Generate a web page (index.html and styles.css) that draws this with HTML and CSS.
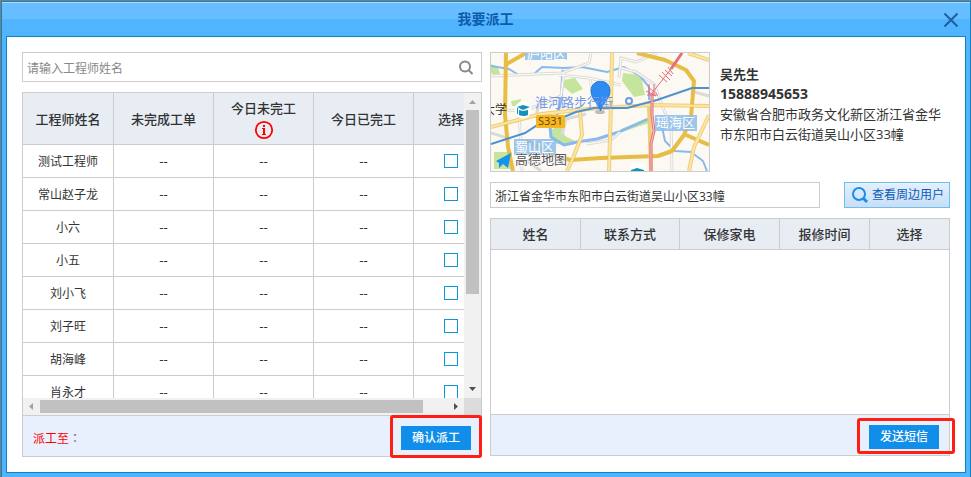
FILE: index.html
```html
<!DOCTYPE html>
<html lang="zh-CN">
<head>
<meta charset="utf-8">
<title>我要派工</title>
<link rel="stylesheet" href="styles.css">
</head>
<body>
<section class="dialog" role="dialog" aria-labelledby="dialog-title">
  <header class="titlebar">
    <h1 class="title" id="dialog-title">我要派工</h1>
    <button class="close" type="button" aria-label="关闭">
      <svg width="16" height="16" viewBox="0 0 16 16"><path d="M1.500 1.500L14.500 14.500M14.500 1.500L1.500 14.500" fill="none" stroke="#1f5f9e" stroke-width="2"/></svg>
    </button>
  </header>
  <main class="content">
    <div class="column">
      <div class="search">
        <input class="search-input" type="text" placeholder="请输入工程师姓名" aria-label="工程师姓名">
        <button class="search-button" type="button" aria-label="搜索">
          <svg width="16" height="16" viewBox="0 0 16 16"><g fill="none" stroke="#888" stroke-width="2"><circle cx="7" cy="7.500" r="5"/><path d="M10.500 11L14.500 15"/></g></svg>
        </button>
      </div>
      <div class="panel engineers">
        <div class="scroller">
          <div class="viewport">
            <table class="grid engineer-grid">
              <colgroup><col class="c-name"><col class="c-num"><col class="c-num"><col class="c-num"><col class="c-pick"></colgroup>
              <thead>
                <tr><th>工程师姓名</th><th>未完成工单</th><th>今日未完工<svg class="info" width="20" height="20" viewBox="0 0 20 20"><circle cx="10" cy="10" r="8.200" fill="none" stroke="#f00" stroke-width="1.800"/><path d="M9 5h2v2H9zM8 8h3v6h1v1H8v-1h1V9H8z" fill="#f00"/></svg></th><th>今日已完工</th><th>选择</th></tr>
              </thead>
              <tbody>
                <tr><td>测试工程师</td><td>--</td><td>--</td><td>--</td><td><input class="tick" type="checkbox" aria-label="选择测试工程师"></td></tr>
                <tr><td>常山赵子龙</td><td>--</td><td>--</td><td>--</td><td><input class="tick" type="checkbox" aria-label="选择常山赵子龙"></td></tr>
                <tr><td>小六</td><td>--</td><td>--</td><td>--</td><td><input class="tick" type="checkbox" aria-label="选择小六"></td></tr>
                <tr><td>小五</td><td>--</td><td>--</td><td>--</td><td><input class="tick" type="checkbox" aria-label="选择小五"></td></tr>
                <tr><td>刘小飞</td><td>--</td><td>--</td><td>--</td><td><input class="tick" type="checkbox" aria-label="选择刘小飞"></td></tr>
                <tr><td>刘子旺</td><td>--</td><td>--</td><td>--</td><td><input class="tick" type="checkbox" aria-label="选择刘子旺"></td></tr>
                <tr><td>胡海峰</td><td>--</td><td>--</td><td>--</td><td><input class="tick" type="checkbox" aria-label="选择胡海峰"></td></tr>
                <tr><td>肖永才</td><td>--</td><td>--</td><td>--</td><td><input class="tick" type="checkbox" aria-label="选择肖永才"></td></tr>
              </tbody>
            </table>
          </div>
          <div class="bar bar-v" aria-hidden="true">
            <svg width="17" height="17" viewBox="0 0 17 17"><path d="M5 11L8.500 7L12 11z" fill="#a3a3a3"/></svg>
            <div class="track"><div class="thumb"></div></div>
            <svg width="17" height="17" viewBox="0 0 17 17"><path d="M5 6L8.500 10L12 6z" fill="#505050"/></svg>
          </div>
          <div class="bar bar-h" aria-hidden="true">
            <svg width="17" height="17" viewBox="0 0 17 17"><path d="M10 5L6 8.500L10 12z" fill="#a3a3a3"/></svg>
            <div class="track"><div class="thumb"></div></div>
            <svg width="17" height="17" viewBox="0 0 17 17"><path d="M7 5L11 8.500L7 12z" fill="#505050"/></svg>
          </div>
          <div class="corner"></div>
        </div>
        <footer class="panel-footer">
          <p class="assign"><span class="assign-label">派工至</span><span class="colon" lang="zh-TW">：</span></p>
          <span class="marked marked-confirm"><button class="primary" type="button">确认派工</button></span>
        </footer>
      </div>
    </div>

    <div class="column">
      <div class="customer">
        <svg class="map" width="218" height="118" viewBox="0 0 218 118" role="img" aria-label="地图">
          <rect width="218" height="118" fill="#fcf9f2"/>
          <g fill="#c5e59c">
            <path d="M0 11Q8 13 9 21L3 22L0 20z"/><path d="M73 27L84 25L92 36L81 41L73 34z"/><path d="M61 76L70 73L74 83L84 88L82 92L65 91L59 82z"/><path d="M132 20L150 22L154 42L143 44L131 28z"/><path d="M20 48L30 46L29 53L21 53z"/><path d="M130 76L157 65L158 70L131 79z"/><path d="M3 99h18v17H3z"/>
          </g>
          <g fill="none" stroke="#8ab9ef" stroke-width="2" stroke-linejoin="round">
            <path d="M0 13L18 16L28 22L43 21L51 14L73 15L91 14L116 19L133 14L149 23L158 34L158 47"/>
            <path d="M72 17L70 48L66 62L59 73L60 84L73 92L86 89L106 86L128 79L157 66" stroke-width="3"/>
            <path d="M171 74L174 88L184 98L200 99L212 108L216 118"/>
          </g>
          <g fill="none" stroke="#dcdad5" stroke-width="3"><path d="M0 23L71 20L98 10L100 0M68 22L98 25L130 32M128 25L130 5L145 9L166 0M73 20L70 43L34 58L12 57M99 25L103 48M0 80L20 86M28 57L31 118M71 82L75 66L95 61M96 91L120 87L129 79M130 15L145 19L163 31L176 65M158 64L180 68L181 118M45 65L48 48M200 38L218 43M28 102L50 118"/></g>
          <g fill="none" stroke="#fff" stroke-width="1"><path d="M0 23L71 20L98 10L100 0M68 22L98 25L130 32M128 25L130 5L145 9L166 0M73 20L70 43L34 58L12 57M99 25L103 48M28 57L31 118M96 91L120 87L129 79M130 15L145 19L163 31L176 65M158 64L180 68L181 118"/></g>
          <g fill="none" stroke="#f0cd78" stroke-width="4" stroke-linejoin="round">
            <path d="M121 0L120 50L118 118M0 74L50 61L97 56L158 52L218 53M89 58L91 82L82 105L76 118"/>
            <path d="M14 12L35 0M15 0L14 62L17 94L22 118" stroke="#e8bd45"/>
            <path d="M146 0L174 7L195 17L203 28L200 64L193 82L181 98L167 103L110 105L79 107L62 101L35 88" stroke="#e8bd45"/>
            <path d="M195 82L218 92" stroke="#e8bd45"/><path d="M197 0L218 7M218 62L203 94L198 118M158 52L160 118"/>
          </g>
          <g fill="none" stroke="#fae7a8" stroke-width="2" stroke-linejoin="round"><path d="M121 0L120 50L118 118M0 74L50 61L97 56L158 52L218 53M89 58L91 82L82 105L76 118M197 0L218 7M218 62L203 94L198 118"/></g>
          <path d="M0 91L34 80L48 71L68 66L85 59L103 55L136 55L166 47L201 35H218" fill="none" stroke="#4e91cf" stroke-width="2"/>
          <g fill="none" stroke="#e26f7b"><path d="M191 0L180 16M161 40V62L163 78L160 91V118" stroke-width="3"/><path d="M161 40V62L163 78L160 91V118" stroke="#f8c8c8" stroke-width="1"/><path d="M180 16L161 40" stroke-width="1"/><path d="M171 19l8 8M168 22l8 7M177 14l5 7M174 17l7 6M157 34l9 7M155 38l10 5M158 31v11M163 31v12M156 42h11" stroke-width="1"/></g>
          <g class="district">
            <rect x="34" y="-8" width="42" height="15"/><text x="36" y="5">庐阳区</text>
            <rect x="23" y="86" width="42" height="16"/><text x="24" y="98">蜀山区</text>
            <rect x="164" y="62" width="42" height="16"/><text x="165" y="74">瑶海区</text>
          </g>
          <text class="place" x="-8" y="61">大学</text>
          <circle cx="32" cy="57" r="8.500" fill="#fff"/><path d="M26 54l6-2l7 2l-7 3zM28 57l4 1l5-1v5q-4 2-9 0zM26 55h1v6h-1z" fill="#1492b9"/>
          <circle cx="146" cy="118" r="8.500" fill="#fff"/><path d="M140 117l6-2l7 2v1h-13z" fill="#1492b9"/>
          <circle cx="138" cy="48" r="3" fill="#fff" stroke="#6d98ec" stroke-width="2"/>
          <rect x="45" y="62" width="29" height="13" rx="1" fill="#f8b51e"/><text class="route" x="47" y="72">S331</text>
          <path d="M5 108L20 100L17 115L12 111L8 115V110z" fill="#1593ec"/>
          <text class="brand" x="24" y="111">高德地图</text>
          <ellipse cx="109" cy="59" rx="5" ry="2" fill="#9b8c9d" opacity=".6"/>
          <path d="M109.500 58C109 52 100 46 100 38C100 25 119 25 119 38C119 46 110 52 109.500 58z" fill="#2e8bf2" stroke="#2477d5" stroke-width="1"/>
          <text class="street" x="44" y="54">淮河路步行街</text>
        </svg>
        <address class="contact">
          <strong>吴先生</strong>
          <strong class="phone">15888945653</strong>
          <span>安徽省合肥市政务文化新区浙江省金华市东阳市白云街道吴山小区33幢</span>
        </address>
      </div>
      <div class="lookup">
        <input class="address-input" type="text" value="浙江省金华市东阳市白云街道吴山小区33幢" aria-label="地址">
        <button class="nearby" type="button">
          <svg width="18" height="18" viewBox="0 0 18 18"><g fill="none" stroke="#168cec" stroke-width="2"><circle cx="8" cy="8" r="6"/><path d="M12 12L16 16" stroke-width="3"/></g></svg>查看周边用户
        </button>
      </div>
      <div class="panel users">
        <table class="grid user-grid">
          <colgroup><col class="u-name"><col class="u-contact"><col class="u-device"><col class="u-time"><col class="u-pick"></colgroup>
          <thead><tr><th>姓名</th><th>联系方式</th><th>保修家电</th><th>报修时间</th><th>选择</th></tr></thead>
        </table>
        <footer class="panel-footer">
          <span class="marked marked-send"><button class="primary" type="button">发送短信</button></span>
        </footer>
      </div>
    </div>
  </main>
</section>
</body>
</html>
```
FILE: styles.css
```css
* {
  box-sizing: border-box;
}

body {
  margin: 0;
  padding: 1px 0 0 1px;
  min-height: 100vh;
  display: flex;
  background: #7c7d7f;
  color: #333;
  font: 12px/20px "Open Sans", "Noto Sans CJK SC", sans-serif;
}

button,
input {
  margin: 0;
  font: inherit;
  color: inherit;
}

button {
  padding: 0;
  border: 0;
  background: none;
}

svg {
  display: block;
  flex: none;
}

.dialog {
  flex: 1;
  min-width: 0;
  display: flex;
  flex-direction: column;
  padding: 0 4px 4px;
  border: solid #1183ba;
  border-width: 1px 1px 0;
  background: #50b4ff;
}

.titlebar {
  display: flex;
  align-items: center;
  height: 34px;
  margin: 0 -4px;
  padding: 0 11px 0 26px;
  border-top: 1px solid #a9dcff;
  background: linear-gradient(#66bdff 16px, #50b4ff 16px);
}

.title {
  flex: 1;
  margin: 0;
  color: #0b5cad;
  font-size: 14px;
  line-height: 18px;
  padding-bottom: 2px;
  font-weight: 700;
  text-align: center;
}

.close {
  width: 16px;
  height: 16px;
}

.content {
  flex: 1;
  display: grid;
  grid-template-columns: minmax(0, 1fr) minmax(0, 1fr);
  gap: 8px;
  padding: 15px;
  border: 1px solid #0a86c2;
  background: #fff;
}

.column {
  display: flex;
  flex-direction: column;
  gap: 10px;
}

.search {
  display: flex;
  align-items: center;
  height: 30px;
  padding-right: 7px;
  border: 1px solid #ccc;
}

.search-input {
  flex: 1;
  min-width: 0;
  height: 28px;
  padding: 2px 4px 0;
  border: 0;
  background: none;
}

.search-input::placeholder {
  color: #888;
  opacity: 1;
}

.panel {
  display: flex;
  flex-direction: column;
  border: 1px solid #ccc;
}

.engineers {
  height: 365px;
}

.users {
  height: 238px;
}

.scroller {
  flex: 1;
  min-height: 0;
  display: grid;
  grid-template: minmax(0, 1fr) 17px / minmax(0, 1fr) 17px;
}

.viewport {
  overflow: hidden;
}

.bar {
  display: flex;
  background: #f1f1f1;
}

.bar-v {
  flex-direction: column;
}

.track {
  flex: 1;
  display: flex;
}

.bar-v .track {
  padding: 0 2px;
}

.bar-h .track {
  padding: 2px 0;
}

.thumb {
  background: #c1c1c1;
}

.bar-v .thumb {
  width: 100%;
  height: 68%;
}

.bar-h .thumb {
  width: 94%;
}

.corner {
  background: #dcdcdc;
}

.grid {
  table-layout: fixed;
  border-collapse: separate;
  border-spacing: 0;
  text-align: center;
}

.engineer-grid {
  width: 465px;
}

.user-grid {
  width: 100%;
}

.c-name {
  width: 91px;
}

.c-num {
  width: 100px;
}

.u-name {
  width: 90px;
}

.u-contact {
  width: 99px;
}

.u-device {
  width: 100px;
}

.u-time {
  width: 90px;
}

.grid th,
.grid td {
  padding: 0;
  border: solid #ccc;
  border-width: 0 1px 1px 0;
}

.grid th {
  height: 52px;
  background: #e7edf3;
  font-size: 13px;
  font-weight: 500;
}

.user-grid th {
  height: 31px;
}

.grid td {
  height: 33px;
  padding-top: 2px;
  font-family: "DejaVu Sans", "Noto Sans CJK SC", sans-serif;
}

.grid td:last-child {
  padding-top: 0;
}

.grid th:last-child,
.grid td:last-child {
  border-right: 0;
}

.info {
  margin: 2px auto 0;
}

.tick {
  display: block;
  width: 14px;
  height: 14px;
  margin: 0 auto;
  border: 1px solid #0a98dc;
  background: #fff;
  appearance: none;
}

.panel-footer {
  display: flex;
  align-items: center;
  height: 41px;
  margin-top: auto;
  padding: 4px 10px 0;
  border-top: 1px solid #ccc;
  background: #e8effd;
}

.assign {
  margin: 0;
  color: #667;
}

.assign-label {
  color: #f00;
}

.colon {
  font-family: "Noto Sans CJK TC", sans-serif;
}

.marked {
  position: relative;
  margin-left: auto;
}

.marked::after {
  content: "";
  position: absolute;
  border: 3px solid #ff1e12;
  border-radius: 3px;
  pointer-events: none;
}

.marked-confirm::after {
  inset: -11px -11px -8px;
}

.marked-send::after {
  inset: -7px -16px -5px -12px;
}

.primary {
  display: block;
  width: 70px;
  height: 24px;
  background: #108ee9;
  color: #fff;
  font-weight: 500;
}

.customer {
  display: flex;
  gap: 10px;
}

.map {
  box-sizing: content-box;
  border: 1px solid #ccc;
  overflow: hidden;
}

.district rect {
  fill: #8bbdec;
  opacity: .85;
}

.district text {
  fill: #fff;
  font-size: 13px;
}

.place {
  fill: #333;
  font-size: 12px;
}

.street {
  fill: #7298ea;
  font-size: 13px;
}

.route {
  fill: #574a16;
  font-size: 11px;
}

.brand {
  fill: #555;
  stroke: #fff;
  stroke-width: 1px;
  paint-order: stroke;
  font-size: 13px;
}

.contact {
  flex: 1;
  min-width: 0;
  padding: 12px 8px 0 0;
  font-size: 13px;
  font-style: normal;
}

.contact strong,
.contact span {
  display: block;
}

.contact .phone {
  font-size: 14px;
}

.lookup {
  display: flex;
  gap: 24px;
}

.address-input {
  flex: 1;
  min-width: 0;
  height: 26px;
  padding: 2px 4px 0;
  border: 1px solid #ccc;
}

.nearby {
  display: flex;
  align-items: center;
  gap: 3px;
  width: 106px;
  height: 26px;
  padding: 0 6px;
  border: 1px solid #6ec0ea;
  background: linear-gradient(#e3f0fd, #c8def7);
  color: #0b5cb5;
  white-space: nowrap;
}
```
